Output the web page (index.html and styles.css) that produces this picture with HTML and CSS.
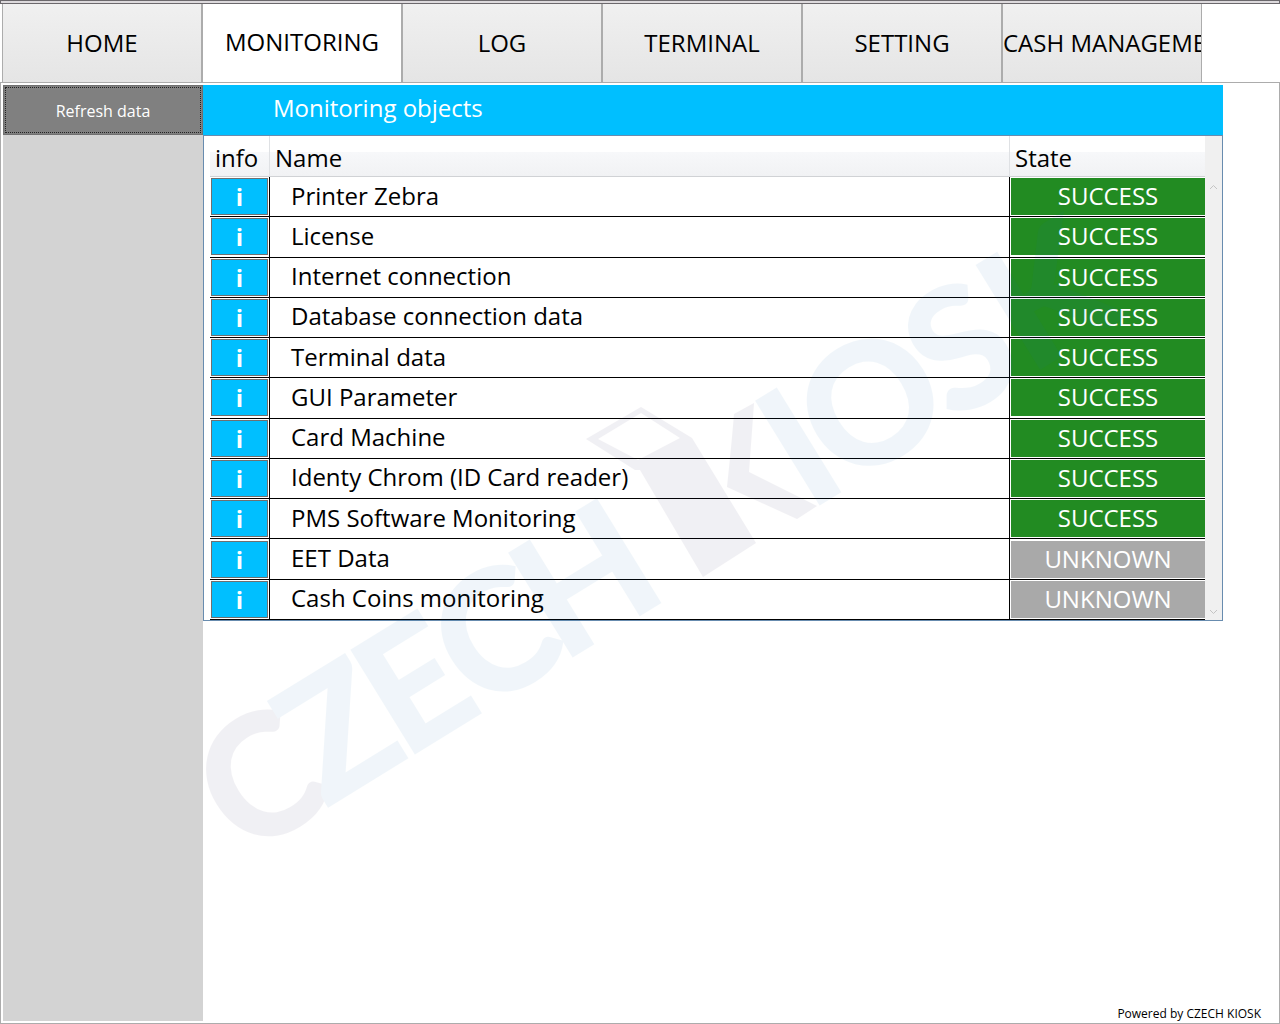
FILE: index.html
```html
<!DOCTYPE html>
<html lang="en">
<head>
  <meta charset="UTF-8" />
  <title>Czech Kiosk - Monitoring</title>
  <meta name="viewport" content="width=device-width, initial-scale=1" />
  <link rel="stylesheet" href="styles.css">
</head>
<body>
  <div class="window-edge"></div>

  <nav class="tabs">
    <button class="tab">HOME</button>
    <button class="tab active">MONITORING</button>
    <button class="tab">LOG</button>
    <button class="tab">TERMINAL</button>
    <button class="tab">SETTING</button>
    <button class="tab tab-long">CASH MANAGEMENT</button>
  </nav>

  <div class="page">
    <aside class="sidebar">
      <button class="btn-refresh">Refresh data</button>
    </aside>

    <main class="content">
      <h1 class="title">Monitoring objects</h1>

      <div class="grid">
        <table class="objects">
          <thead>
            <tr><th class="col-info">info</th><th>Name</th><th class="col-state">State</th></tr>
          </thead>
          <tbody>
            <tr><td class="info"><button>i</button></td><td class="name">Printer Zebra</td><td class="state"><div class="success">SUCCESS</div></td></tr>
            <tr><td class="info"><button>i</button></td><td class="name">License</td><td class="state"><div class="success">SUCCESS</div></td></tr>
            <tr><td class="info"><button>i</button></td><td class="name">Internet connection</td><td class="state"><div class="success">SUCCESS</div></td></tr>
            <tr><td class="info"><button>i</button></td><td class="name">Database connection data</td><td class="state"><div class="success">SUCCESS</div></td></tr>
            <tr><td class="info"><button>i</button></td><td class="name">Terminal data</td><td class="state"><div class="success">SUCCESS</div></td></tr>
            <tr><td class="info"><button>i</button></td><td class="name">GUI Parameter</td><td class="state"><div class="success">SUCCESS</div></td></tr>
            <tr><td class="info"><button>i</button></td><td class="name">Card Machine</td><td class="state"><div class="success">SUCCESS</div></td></tr>
            <tr><td class="info"><button>i</button></td><td class="name">Identy Chrom (ID Card reader)</td><td class="state"><div class="success">SUCCESS</div></td></tr>
            <tr><td class="info"><button>i</button></td><td class="name">PMS Software Monitoring</td><td class="state"><div class="success">SUCCESS</div></td></tr>
            <tr><td class="info"><button>i</button></td><td class="name">EET Data</td><td class="state"><div class="unknown">UNKNOWN</div></td></tr>
            <tr><td class="info"><button>i</button></td><td class="name">Cash Coins monitoring</td><td class="state"><div class="unknown">UNKNOWN</div></td></tr>
          </tbody>
        </table>
        <div class="scrollbar">
          <button aria-label="Scroll up"><svg width="9" height="6" viewBox="0 0 9 6"><path d="M1 5 L4.5 1.5 L8 5" /></svg></button>
          <button aria-label="Scroll down"><svg width="9" height="6" viewBox="0 0 9 6"><path d="M1 1 L4.5 4.5 L8 1" /></svg></button>
        </div>
      </div>

      <!-- faded logo across the page -->
      <svg class="watermark" width="1000" height="800" viewBox="200 80 1000 800" aria-hidden="true">
        <g class="wm-text" transform="translate(330 805) rotate(-31.6)">
          <text class="wm-dark" x="-101" y="0">C</text>
          <text x="-5" y="0">Z</text>
          <text x="87" y="0">E</text>
          <text x="175" y="0">C</text>
          <text x="272" y="0">H</text>
          <text x="562" y="0">I</text>
          <text x="604" y="0">O</text>
          <text x="731" y="0">S</text>
          <text x="821" y="0">K</text>
        </g>
        <path class="wm-dark" fill-rule="evenodd" d="M586 439 L641 407 L692 438 L756 543 L703 577 L640 470 L635 470 Z M598 439 L638 460 L680 438 L641 413 Z" />
        <path class="wm-dark" d="M754 403 L734 414 Q732 440 727 487 L797 519 L817 506 L749 472 Z" />
      </svg>

      <footer class="powered">Powered by CZECH KIOSK</footer>
    </main>
  </div>
</body>
</html>
```
FILE: styles.css
```css
* {
  box-sizing: border-box;
}
body {
  margin: 0;
  min-height: 100vh;
  display: flex;
  flex-direction: column;
  font-family: 'Open Sans', 'Noto Sans', sans-serif;
  font-size: 24px;
  color: #000;
  background: #fff;
}
button {
  font: inherit;
  border: none;
  padding: 0;
  cursor: pointer;
}
.window-edge {
  height: 4px;
  background: #dcd9dc;
  border: 1px solid #6b686c;
}
.tabs {
  display: flex;
  height: 78px;
  padding-left: 2px;
}
.tab {
  width: 200px;
  padding-bottom: 2px;
  border: 1px solid #acacac;
  border-width: 0 1px;
  background: linear-gradient(#f0f0f0, #e5e5e5);
  color: #000;
  white-space: nowrap;
  overflow: hidden;
}
.tab.active {
  background: #fff;
  padding-bottom: 4px;
}
.tab-long {
  text-align: left;
}
.page {
  flex: 1;
  display: flex;
  border: 1px solid #acacac;
  padding: 2px 0 2px 2px;
}
.sidebar {
  width: 200px;
  flex-shrink: 0;
  background: #d3d3d3;
}
.btn-refresh {
  display: block;
  width: 100%;
  height: 50px;
  padding-top: 2px;
  background: #808080;
  border: 1px solid #707070;
  color: #fff;
  font-size: 16px;
  outline: 1px dotted #222;
  outline-offset: -3px;
}
.content {
  flex: 1;
  display: flex;
  flex-direction: column;
  position: relative;
}
.title {
  margin: 0 56px 0 0;
  height: 50px;
  padding-left: 70px;
  background: #00bfff;
  color: #fff;
  font-size: 24px;
  font-weight: normal;
  line-height: 46px;
}
.grid {
  display: flex;
  margin-right: 56px;
  border: 1px solid #688caf;
  padding-left: 6px;
}
.objects {
  flex: 1;
  height: 484px;
  border-collapse: separate;
  border-spacing: 0;
  table-layout: fixed;
}
.objects th {
  height: 41px;
  padding: 3px 5px 0;
  text-align: left;
  font-weight: normal;
  line-height: 36px;
  background: linear-gradient(#fff 40%, #f7f8fa 41%, #f1f2f4);
  border-right: 1px solid #dfe1e4;
  border-bottom: 1px solid #d0d2d5;
}
.objects th:last-child {
  border-right: none;
}
.objects .col-info {
  width: 60px;
}
.objects .col-state {
  width: 195px;
}
.objects td {
  padding: 0;
  border-right: 1px solid #000;
  border-bottom: 1px solid #000;
  line-height: 36px;
}
.objects td.info {
  padding: 1px;
}
.info button {
  display: block;
  width: 100%;
  height: 37px;
  background: #00bfff;
  border: 1px solid #707070;
  color: #fff;
  font-weight: bold;
  line-height: 36px;
}
.objects td.name {
  padding: 0 0 2px 21px;
}
.objects td.state {
  padding: 1px 0 1px 1px;
  border-right: none;
}
.state div {
  height: 37px;
  color: #fff;
  text-align: center;
}
.success {
  background: #228b22;
}
.unknown {
  background: #a9a9a9;
}
.scrollbar {
  width: 17px;
  padding: 42px 0 0;
  background: #f0f0f0;
  display: flex;
  flex-direction: column;
  justify-content: space-between;
}
.scrollbar button {
  height: 17px;
  background: none;
  display: flex;
  align-items: center;
  justify-content: center;
}
.scrollbar path {
  fill: none;
  stroke: #c4c4c4;
}
.watermark {
  position: absolute;
  left: -3px;
  top: -5px;
  opacity: 0.06;
  pointer-events: none;
}
.wm-text {
  font-family: Lato, sans-serif;
  font-size: 166px;
  font-weight: bold;
  fill: #146eb4;
  stroke: #146eb4;
  stroke-width: 3px;
}
.wm-dark {
  fill: #1e1450;
}
.wm-text .wm-dark {
  stroke: #1e1450;
}
.powered {
  margin-top: auto;
  padding-right: 18px;
  text-align: right;
  font-size: 12px;
  line-height: 14px;
}
```
